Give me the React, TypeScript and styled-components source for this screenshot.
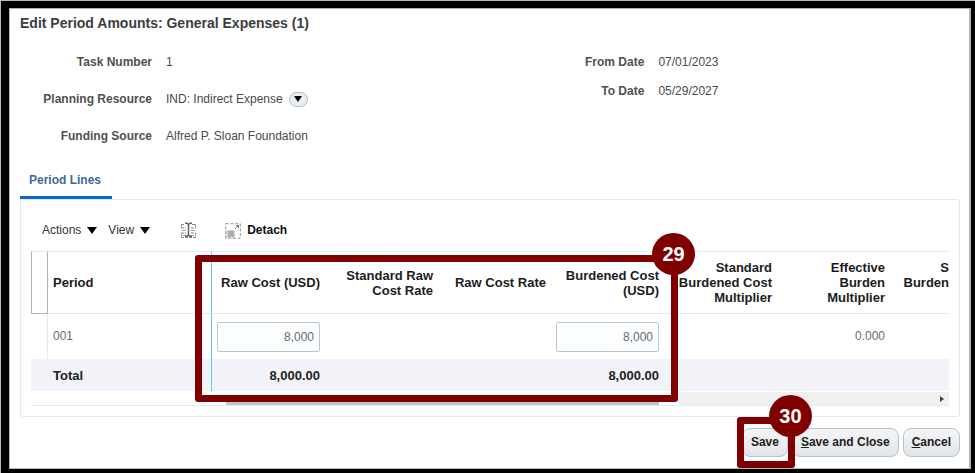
import React from "react";
import styled, { createGlobalStyle, css } from "styled-components";

const GlobalStyle = createGlobalStyle`
  *, *::before, *::after { box-sizing: border-box; }
  body {
    margin: 0;
    background: #fff;
    font-family: "Liberation Sans", Arial, sans-serif;
    font-size: 12px;
    line-height: 15px;
    color: #4a4a4a;
  }
  button, input { font: inherit; color: inherit; }
`;

const maroon = "#7f0000";
const hairline = "#e3eaf1";

const Frame = styled.div`
  min-height: 100vh;
  display: flex;
  border: 1px solid #b9bdb9;
  border-right: 0;
  border-bottom: 0;
  background: #000;
  padding: 7px 4px 5px 8px;
`;

const Dialog = styled.main`
  flex: 1;
  min-width: 0;
  border: 1px solid #a9b5c1;
  border-right-width: 2px;
  background: #fff;
  padding: 6px 9px 11px 10px;
`;

const Title = styled.h1`
  margin: 0;
  font-size: 14px;
  line-height: 16px;
  font-weight: bold;
  color: #3c3c3c;
`;

const Details = styled.div`
  display: grid;
  grid-template-columns: 11fr 10fr;
  align-items: start;
  padding-top: 23px;
`;

const FieldList = styled.dl<{ $gap: number }>`
  display: grid;
  grid-template-columns: 132px 1fr;
  column-gap: 14px;
  row-gap: ${(p) => p.$gap}px;
  margin: 0;
  line-height: 16px;
`;

const FieldLabel = styled.dt`
  text-align: right;
  font-weight: bold;
  color: #505050;
`;

const FieldValue = styled.dd`
  display: flex;
  align-items: center;
  gap: 6px;
  margin: 0;
  height: 16px;
  white-space: nowrap;
`;

const OvalButton = styled.button`
  display: flex;
  align-items: center;
  justify-content: center;
  width: 19px;
  height: 15px;
  padding: 0;
  border: 1px solid #a9bac8;
  border-radius: 8px;
  background: #e9eef3;
  color: #000;
`;

const Tabs = styled.div`
  display: flex;
  padding-top: 23px;
`;

const Tab = styled.button`
  padding: 6px 11px 8px 9px;
  border: 0;
  border-bottom: 3px solid #0a6acb;
  background: none;
  font-weight: bold;
  color: #41699a;
`;

const Panel = styled.section`
  border: 1px solid ${hairline};
  border-radius: 0 3px 3px 3px;
  padding: 0 10px 10px;
`;

const Toolbar = styled.div`
  display: flex;
  align-items: center;
  height: 51px;
  padding: 10px 0 0 11px;
`;

const ToolButton = styled.button<{ $strong?: boolean; $space?: number }>`
  display: flex;
  align-items: center;
  gap: 6px;
  margin-left: ${(p) => p.$space ?? 0}px;
  padding: 0;
  border: 0;
  background: none;
  color: ${(p) => (p.$strong ? "#111" : "#333")};
  font-weight: ${(p) => (p.$strong ? "bold" : "normal")};
`;

const TableArea = styled.div`
  position: relative;
`;

const Grid = styled.table`
  width: 100%;
  table-layout: fixed;
  border-collapse: separate;
  border-spacing: 0;
`;

const SelectorCol = styled.col`
  width: 17px;
`;
const PeriodCol = styled.col`
  width: 164px;
`;
const AmountCol = styled.col`
  width: 113px;
`;

const SelectorHead = styled.th`
  border: 1px solid #b5b5b5;
  border-top-color: ${hairline};
  padding: 0;
`;

const numeric = css`
  text-align: right;
  padding: 0 5px;

  &:last-child {
    padding: 0;
  }
`;
const frozenEdge = css`
  text-align: left;
  padding: 0 5px;
  border-right: 1px solid #5fcbe6;
`;

const HeadCell = styled.th<{ $frozen?: boolean }>`
  height: 63px;
  border-top: 1px solid ${hairline};
  border-bottom: 1px solid ${hairline};
  font-size: 13px;
  color: #1c1c1c;
  white-space: nowrap;
  ${(p) => (p.$frozen ? frozenEdge : numeric)}
`;

const BodyCell = styled.td<{ $frozen?: boolean }>`
  height: 45px;
  color: #6b6b6b;
  ${(p) => (p.$frozen ? frozenEdge : numeric)}
`;

const SelectorCell = styled.td`
  border-right: 1px solid ${hairline};
`;

const TotalCell = styled.td<{ $frozen?: boolean }>`
  height: 32px;
  background: #f1f3f8;
  font-size: 13px;
  font-weight: bold;
  color: #222;
  ${(p) => (p.$frozen ? frozenEdge : numeric)}
`;

const AmountInput = styled.input`
  display: block;
  width: 100%;
  height: 30px;
  padding: 0 5px;
  border: 1px solid #b9c8d0;
  border-radius: 2px;
  background: #fcfdfe;
  text-align: right;
`;

const ScrollRow = styled.div`
  display: flex;
  height: 15px;
  padding-top: 1px;
  border-bottom: 1px solid ${hairline};
`;

const FrozenSpace = styled.div`
  width: 195px;
`;

const Track = styled.div`
  flex: 1;
  display: flex;
  align-items: center;
  background: linear-gradient(to right, #fff 452px, #f0f0f0 452px);
`;

const Thumb = styled.div`
  width: 433px;
  height: 8px;
  align-self: flex-end;
  background: #c4c4c4;
`;

const ScrollArrow = styled.button`
  display: flex;
  margin-left: auto;
  padding: 0 5px;
  border: 0;
  background: none;
  color: #404040;
`;

const Actions = styled.footer`
  display: flex;
  justify-content: flex-end;
  gap: 4px;
  padding-top: 11px;
`;

const ActionButton = styled.button`
  height: 29px;
  padding: 0 8px 1px;
  border: 1px solid #b4c3cf;
  border-radius: 8px;
  background: linear-gradient(#f4f5f6, #e2e5e8);
  font-weight: bold;
  color: #222;
  white-space: nowrap;
`;

const SaveSlot = styled.div`
  position: relative;
`;

const Highlight = styled.div`
  position: absolute;
  border: 7px solid ${maroon};
  border-radius: 3px;
  pointer-events: none;
  z-index: 1;
`;

const LinesHighlight = styled(Highlight)`
  left: 164px;
  top: 4px;
  width: 483px;
  height: 147px;
`;

const SaveHighlight = styled(Highlight)`
  inset: -11px -7px -11px -5px;
`;

const Badge = styled.span`
  position: absolute;
  top: -29px;
  right: -24px;
  width: 43px;
  height: 42px;
  border-radius: 50%;
  background: ${maroon};
  color: #fff;
  font-size: 20px;
  font-weight: bold;
  line-height: 42px;
  text-align: center;
`;

const Caret = ({ width, height }: { width: number; height: number }) => (
  <svg width={width} height={height} viewBox="0 0 10 8" preserveAspectRatio="none" aria-hidden="true">
    <path d="M0 0h10L5 8z" fill="#000" />
  </svg>
);

const FreezeIcon = () => (
  <svg width="17" height="17" viewBox="0 0 17 17" fill="none" aria-hidden="true">
    <path d="M1 2.500h4M12 2.500h4M1 6h5M11 6h5M1 11h5M11 11h5M1 15.500h15" stroke="#85898d" strokeDasharray="3 1" />
    <path d="M1.500 2v4M15.500 2v4M1.500 11v5M15.500 11v5M2 8.500h4M11 8.500h4M3 13.500h3M11 13.500h3" stroke="#9a9ea1" />
    <path d="M5 1c2 0 3 .4 3.500 1.600C9 1.400 10 1 12 1M8.500 2.500v10.500M5 14.500c2 0 3-.4 3.500-1.600.5 1.200 1.500 1.600 3.500 1.600" stroke="#5c6064" strokeWidth="1.500" />
  </svg>
);

const DetachIcon = () => (
  <svg width="16" height="16" viewBox="0 0 16 16" fill="none" aria-hidden="true">
    <rect x=".7" y=".7" width="14.600" height="14.600" stroke="#8f9396" strokeDasharray="3 1.800" />
    <rect x="1" y="7" width="9" height="8" fill="#d3d5d7" />
    <path d="M3 9h6M3 11h6M3 13h6" stroke="#86898c" />
    <path d="M10 6l3-3" stroke="#8a8e91" />
    <path d="M10.500 2H14v3.500z" fill="#6a6e72" />
  </svg>
);

const columns: string[][] = [
  ["Raw Cost (USD)"],
  ["Standard Raw", "Cost Rate"],
  ["Raw Cost Rate"],
  ["Burdened Cost", "(USD)"],
  ["Standard", "Burdened Cost", "Multiplier"],
  ["Effective", "Burden", "Multiplier"],
  ["S", "Burden", "\u00a0"],
];

const editable = [0, 3];

export default function App() {
  return (
    <>
      <GlobalStyle />
      <Frame>
        <Dialog>
          <Title>Edit Period Amounts: General Expenses (1)</Title>

          <Details>
            <FieldList $gap={21}>
              <FieldLabel>Task Number</FieldLabel>
              <FieldValue>1</FieldValue>
              <FieldLabel>Planning Resource</FieldLabel>
              <FieldValue>
                IND: Indirect Expense
                <OvalButton aria-label="Planning resource details">
                  <Caret width={8} height={6} />
                </OvalButton>
              </FieldValue>
              <FieldLabel>Funding Source</FieldLabel>
              <FieldValue>Alfred P. Sloan Foundation</FieldValue>
            </FieldList>
            <FieldList $gap={13}>
              <FieldLabel>From Date</FieldLabel>
              <FieldValue>07/01/2023</FieldValue>
              <FieldLabel>To Date</FieldLabel>
              <FieldValue>05/29/2027</FieldValue>
            </FieldList>
          </Details>

          <Tabs role="tablist">
            <Tab role="tab" aria-selected="true">Period Lines</Tab>
          </Tabs>

          <Panel>
            <Toolbar>
              <ToolButton>Actions <Caret width={10} height={7} /></ToolButton>
              <ToolButton $space={11}>View <Caret width={10} height={7} /></ToolButton>
              <ToolButton $space={30} aria-label="Freeze"><FreezeIcon /></ToolButton>
              <ToolButton $space={28} $strong><DetachIcon />Detach</ToolButton>
            </Toolbar>

            <TableArea>
              <Grid>
                <colgroup>
                  <SelectorCol />
                  <PeriodCol />
                  {columns.slice(0, -1).map((_, i) => <AmountCol key={i} />)}
                  <col />
                </colgroup>
                <thead>
                  <tr>
                    <SelectorHead aria-label="Row selector" />
                    <HeadCell $frozen>Period</HeadCell>
                    {columns.map((lines, i) => (
                      <HeadCell key={i}>
                        {lines.map((line, n) => (
                          <React.Fragment key={n}>{n > 0 && <br />}{line}</React.Fragment>
                        ))}
                      </HeadCell>
                    ))}
                  </tr>
                </thead>
                <tbody>
                  <tr>
                    <SelectorCell />
                    <BodyCell $frozen>001</BodyCell>
                    {columns.map((lines, i) => (
                      <BodyCell key={i}>
                        {editable.includes(i) && (
                          <AmountInput aria-label={lines.join(" ")} defaultValue="8,000" />
                        )}
                        {i === 5 && "0.000"}
                      </BodyCell>
                    ))}
                  </tr>
                </tbody>
                <tfoot>
                  <tr>
                    <TotalCell />
                    <TotalCell $frozen>Total</TotalCell>
                    {columns.map((_, i) => (
                      <TotalCell key={i}>{editable.includes(i) && "8,000.00"}</TotalCell>
                    ))}
                  </tr>
                </tfoot>
              </Grid>
              <ScrollRow>
                <FrozenSpace />
                <Track>
                  <Thumb />
                  <ScrollArrow aria-label="Scroll right">
                    <svg width="4" height="6" viewBox="0 0 4 6" aria-hidden="true">
                      <path d="M0 0l4 3-4 3z" fill="currentColor" />
                    </svg>
                  </ScrollArrow>
                </Track>
              </ScrollRow>
              <LinesHighlight><Badge>29</Badge></LinesHighlight>
            </TableArea>
          </Panel>

          <Actions>
            <SaveSlot>
              <ActionButton>Save</ActionButton>
              <SaveHighlight><Badge>30</Badge></SaveHighlight>
            </SaveSlot>
            <ActionButton><u>S</u>ave and Close</ActionButton>
            <ActionButton><u>C</u>ancel</ActionButton>
          </Actions>
        </Dialog>
      </Frame>
    </>
  );
}
